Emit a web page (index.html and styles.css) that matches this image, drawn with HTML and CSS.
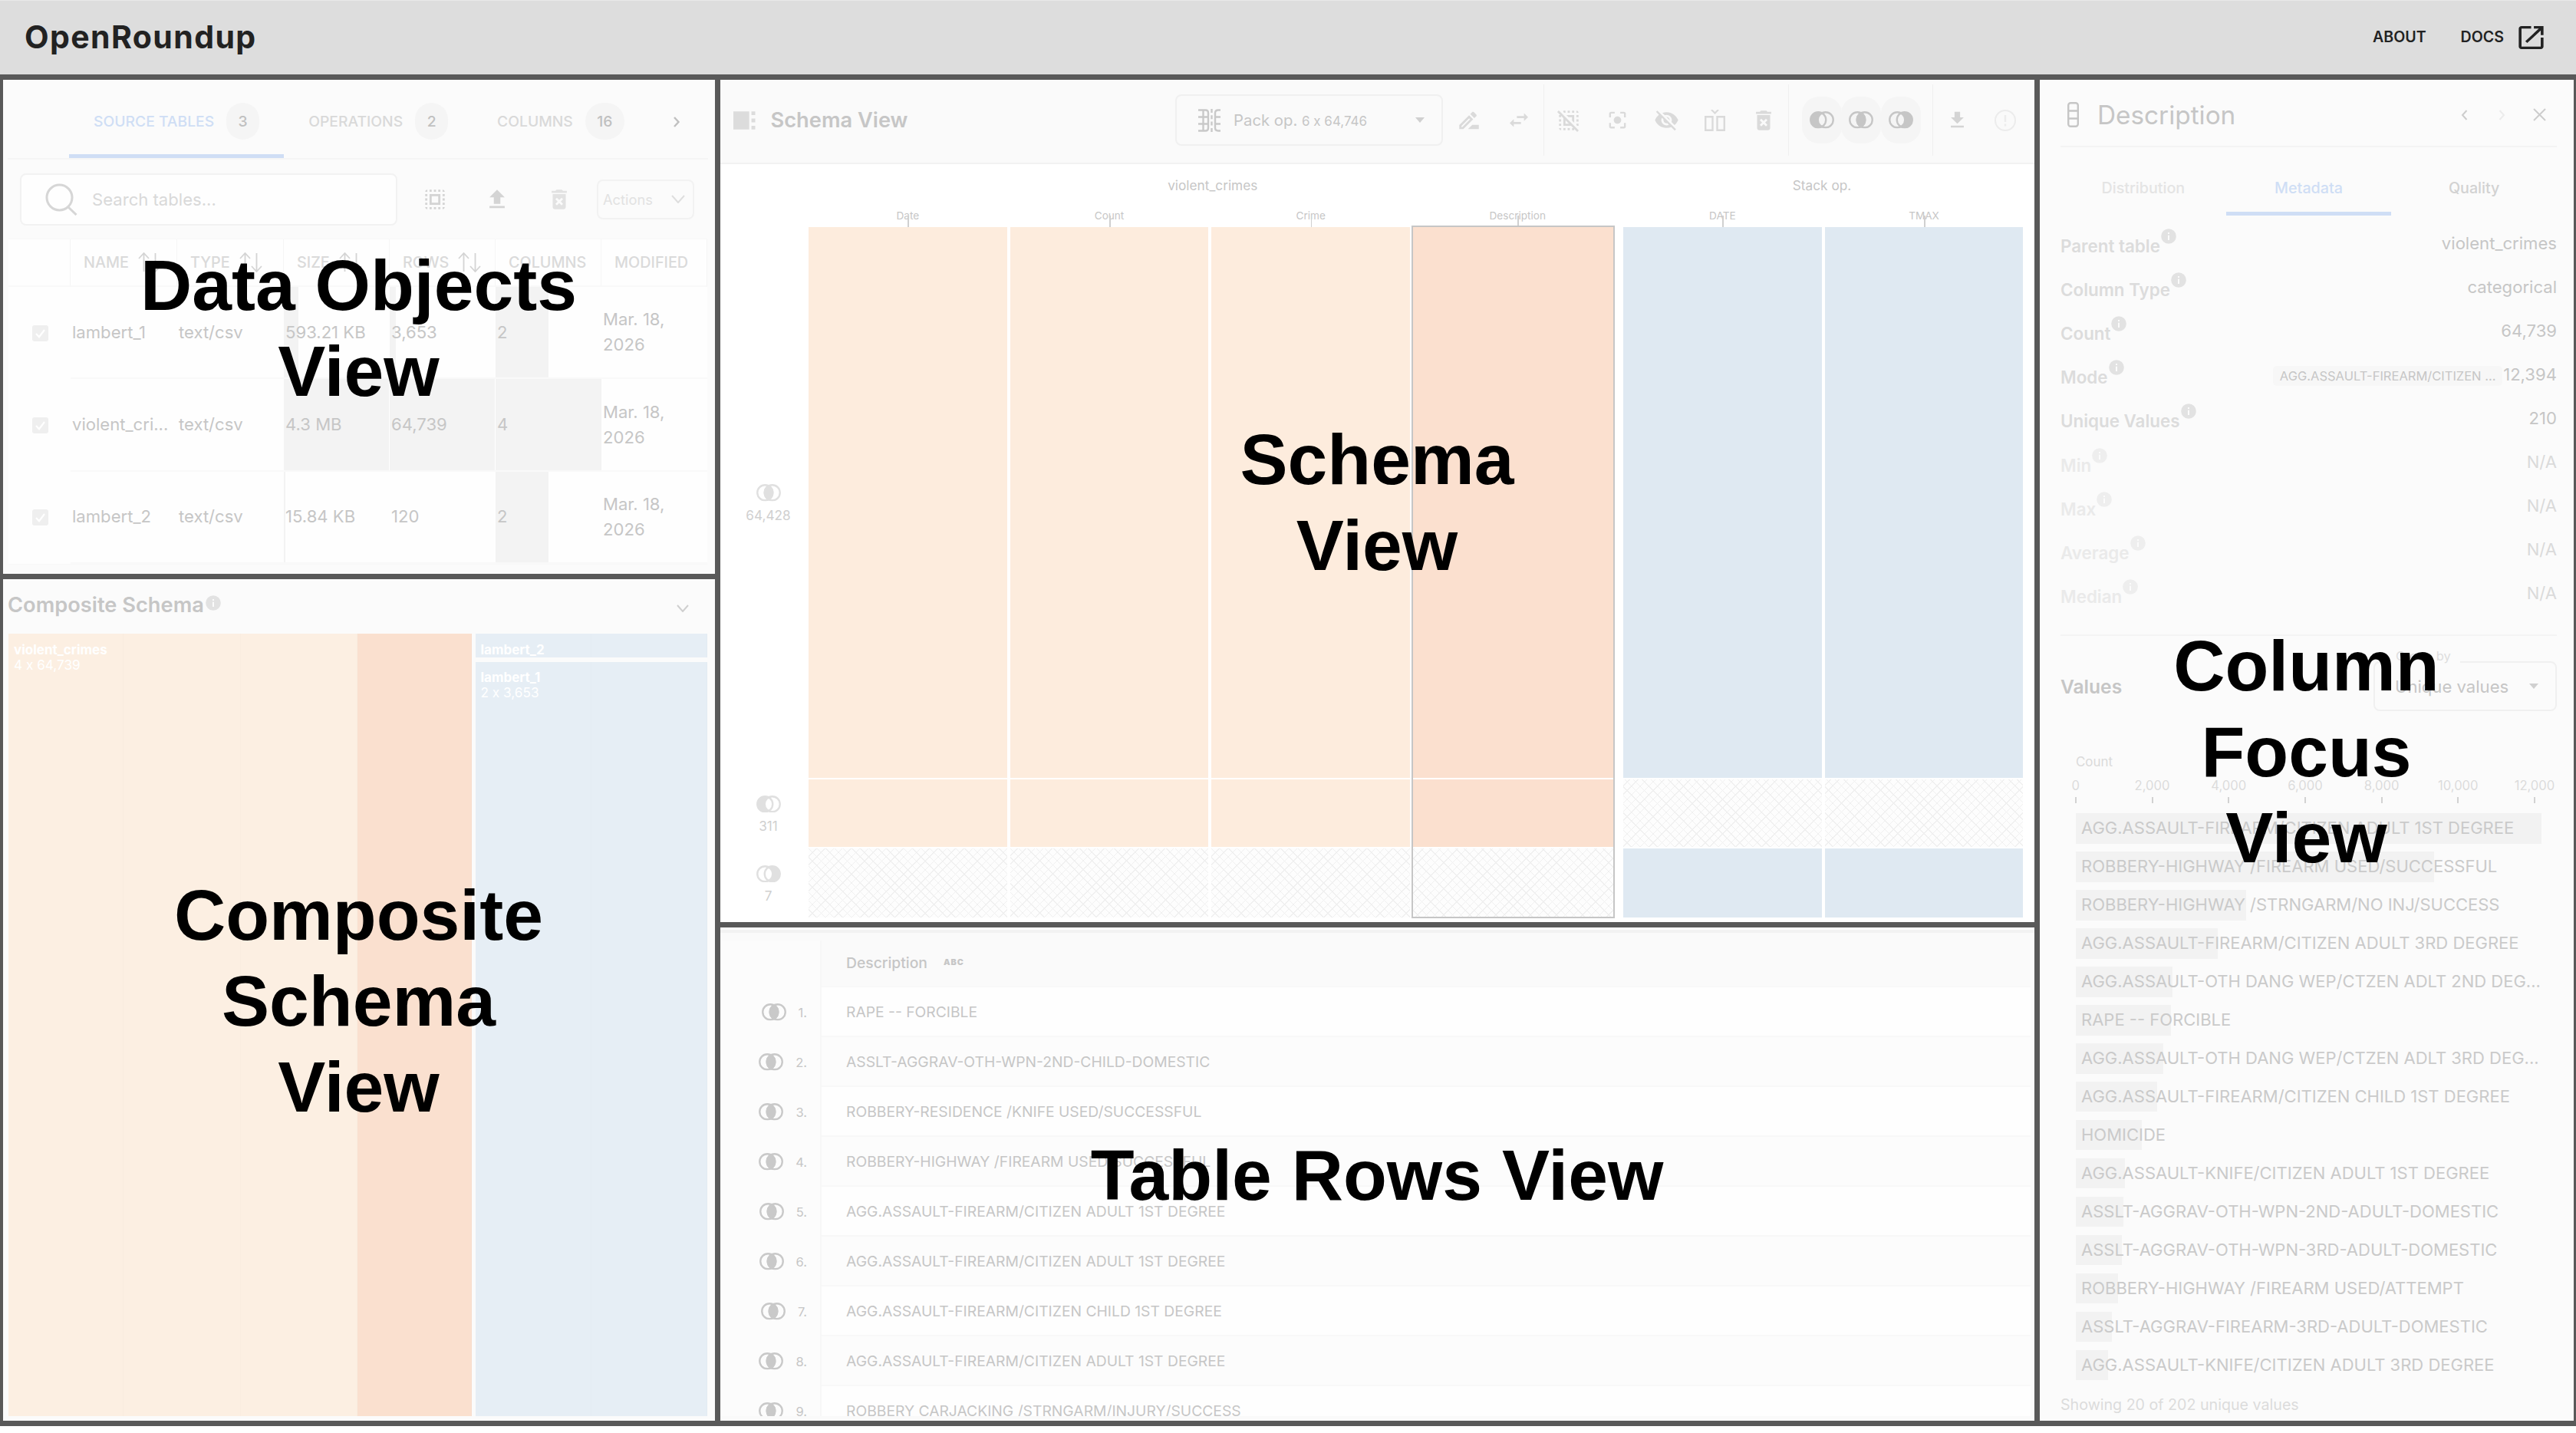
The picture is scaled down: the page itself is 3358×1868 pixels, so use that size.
FILE: index.html
```
<!DOCTYPE html>
<html lang="en">
<head>
    <meta charset="UTF-8">
    <meta name="viewport" content="width=device-width, initial-scale=1.0">
    <title>OpenRoundup</title>
    <link rel="stylesheet" href="styles.css">
</head>
<body>
    <svg class="symbols" xmlns="http://www.w3.org/2000/svg">
        <symbol id="venn-both" viewBox="0 0 32 22.5">
            <circle cx="11.25" cy="11.25" r="10" fill="none" stroke="currentColor" stroke-width="2.4"/>
            <circle cx="20.75" cy="11.25" r="10" fill="none" stroke="currentColor" stroke-width="2.4"/>
            <path d="M16 2.45A10 10 0 0 1 16 20.05A10 10 0 0 1 16 2.45z" fill="currentColor" stroke="currentColor" stroke-width="2.4"/>
        </symbol>
        <symbol id="venn-left" viewBox="0 0 32 22.5">
            <path d="M16 2.45A10 10 0 1 0 16 20.05A10 10 0 0 1 16 2.45z" fill="currentColor"/>
            <circle cx="11.25" cy="11.25" r="10" fill="none" stroke="currentColor" stroke-width="2.4"/>
            <circle cx="20.75" cy="11.25" r="10" fill="none" stroke="currentColor" stroke-width="2.4"/>
        </symbol>
        <symbol id="venn-right" viewBox="0 0 32 22.5">
            <path d="M16 2.45A10 10 0 1 1 16 20.05A10 10 0 0 0 16 2.45z" fill="currentColor"/>
            <circle cx="11.25" cy="11.25" r="10" fill="none" stroke="currentColor" stroke-width="2.4"/>
            <circle cx="20.75" cy="11.25" r="10" fill="none" stroke="currentColor" stroke-width="2.4"/>
        </symbol>
        <symbol id="info" viewBox="0 0 20 20">
            <circle cx="10" cy="10" r="9.8" fill="currentColor"/>
            <rect x="9" y="5" width="2" height="2" fill="#fbfbfb"/>
            <rect x="9" y="8.6" width="2" height="6.4" fill="#fbfbfb"/>
        </symbol>
        <symbol id="trash" viewBox="0 0 24 24">
            <path d="M6 19c0 1.1.9 2 2 2h8c1.1 0 2-.9 2-2V7H6v12zm2.46-7.12l1.41-1.41L12 12.59l2.12-2.12 1.41 1.41L13.41 14l2.12 2.12-1.41 1.41L12 15.41l-2.12 2.12-1.41-1.41L10.59 14l-2.13-2.12zM15.5 4l-1-1h-5l-1 1H5v2h14V4z" fill="currentColor"/>
        </symbol>
        <symbol id="check" viewBox="0 0 21 21">
            <rect width="21" height="21" rx="3" fill="#efefef"/>
            <path d="M5 11l4 4.2L16 6" fill="none" stroke="#fff" stroke-width="2.2"/>
        </symbol>
        <symbol id="sort" viewBox="0 0 30 26">
            <path d="M7.5 25V1.5M1 8l6.5-7L14 8M22.5 1v23.5M16 18l6.5 7 6.5-7" fill="none" stroke="currentColor" stroke-width="1.8"/>
        </symbol>
        <symbol id="caret" viewBox="0 0 12 7">
            <path d="M0 0h12L6 7z" fill="currentColor"/>
        </symbol>
    </svg>

    <header class="app-header">
        <div class="brand">OpenRoundup</div>
        <nav class="nav">
            <a class="nav-about">ABOUT</a>
            <a class="nav-docs">DOCS</a>
            <svg class="nav-icon" viewBox="0 0 24 24" preserveAspectRatio="none"><path d="M19 19H5V5h7V3H5c-1.11 0-2 .9-2 2v14c0 1.1.89 2 2 2h14c1.1 0 2-.9 2-2v-7h-2v7zM14 3v2h3.59l-9.83 9.83 1.41 1.41L19 6.41V10h2V3h-7z" fill="#222"/></svg>
        </nav>
    </header>

    <main class="workspace">
        <div class="col col-left">
            <section class="panel data-objects">
                <div class="tabs">
                    <div class="tab active">SOURCE TABLES<span class="badge">3</span></div>
                    <div class="tab">OPERATIONS<span class="badge">2</span></div>
                    <div class="tab">COLUMNS<span class="badge wide">16</span></div>
                    <svg class="tab-next" viewBox="0 0 9 14"><path d="M1.5 1l5.5 6-5.5 6" fill="none" stroke="#c0c0c0" stroke-width="2.4"/></svg>
                </div>
                <div class="search-row">
                    <div class="search">
                        <svg width="43" height="42" viewBox="0 0 43 42"><circle cx="19.5" cy="18.5" r="16.5" fill="none" stroke="#d6d6d6" stroke-width="3"/><path d="M30.5 30.5l11 10.5" stroke="#d6d6d6" stroke-width="3"/></svg>
                        <span>Search tables...</span>
                    </div>
                    <svg class="tool" width="34" height="34" viewBox="0 0 24 24"><path d="M3 5h2V3c-1.1 0-2 .9-2 2zm0 8h2v-2H3v2zm4 8h2v-2H7v2zM3 9h2V7H3v2zm10-6h-2v2h2V3zm6 0v2h2c0-1.1-.9-2-2-2zM5 21v-2H3c0 1.1.9 2 2 2zm-2-4h2v-2H3v2zM9 3H7v2h2V3zm2 18h2v-2h-2v2zm8-8h2v-2h-2v2zm0 8c1.1 0 2-.9 2-2h-2v2zm0-12h2V7h-2v2zm0 8h2v-2h-2v2zm-4 4h2v-2h-2v2zm0-16h2V3h-2v2zM7 17h10V7H7v10zm2-8h6v6H9V9z" fill="currentColor"/></svg>
                    <svg class="tool" width="34" height="34" viewBox="0 0 24 24"><path d="M5 20h14v-2H5v2zm0-10h4v6h6v-6h4l-7-7-7 7z" fill="currentColor"/></svg>
                    <svg class="tool light" width="34" height="34"><use href="#trash"/></svg>
                    <div class="actions">
                        <span>Actions</span>
                        <svg width="18" height="11" viewBox="0 0 18 11"><path d="M1 1l8 9 8-9" fill="none" stroke="#dedede" stroke-width="2"/></svg>
                    </div>
                </div>
                <div class="table">
                    <div class="tr head">
                        <div></div>
                        <div>NAME<svg class="sort"><use href="#sort"/></svg></div>
                        <div>TYPE<svg class="sort"><use href="#sort"/></svg></div>
                        <div>SIZE<svg class="sort"><use href="#sort"/></svg></div>
                        <div>ROWS<svg class="sort"><use href="#sort"/></svg></div>
                        <div>COLUMNS</div>
                        <div>MODIFIED</div>
                    </div>
                    <div class="tr">
                        <div class="sel"><svg><use href="#check"/></svg></div>
                        <div>lambert_1</div>
                        <div>text/csv</div>
                        <div class="meter"><i style="width:19px"></i><span>593.21 KB</span></div>
                        <div class="meter"><i style="width:8px"></i><span>3,653</span></div>
                        <div class="meter"><i style="width:69px"></i><span>2</span></div>
                        <div>Mar. 18, 2026</div>
                    </div>
                    <div class="tr">
                        <div class="sel"><svg><use href="#check"/></svg></div>
                        <div>violent_cri...</div>
                        <div>text/csv</div>
                        <div class="meter"><i style="width:137px"></i><span>4.3 MB</span></div>
                        <div class="meter"><i style="width:137px"></i><span>64,739</span></div>
                        <div class="meter"><i style="width:138px"></i><span>4</span></div>
                        <div>Mar. 18, 2026</div>
                    </div>
                    <div class="tr">
                        <div class="sel"><svg><use href="#check"/></svg></div>
                        <div>lambert_2</div>
                        <div>text/csv</div>
                        <div class="meter"><i style="width:2px"></i><span>15.84 KB</span></div>
                        <div class="meter"><span>120</span></div>
                        <div class="meter"><i style="width:69px"></i><span>2</span></div>
                        <div>Mar. 18, 2026</div>
                    </div>
                </div>
                <div class="overlay">Data Objects<br>View</div>
            </section>

            <section class="panel composite">
                <div class="composite-head">
                    <h2>Composite Schema</h2>
                    <svg class="info"><use href="#info"/></svg>
                    <svg class="fold" viewBox="0 0 16 10"><path d="M1 1l7 8 7-8" fill="none" stroke="#cfcfcf" stroke-width="2"/></svg>
                </div>
                <div class="treemap">
                    <div class="tm tm-crimes">
                        <div class="tm-label"><b>violent_crimes</b>4 x 64,739</div>
                        <div></div>
                        <div></div>
                        <div class="picked"></div>
                    </div>
                    <div class="tm-stack">
                        <div class="tm tm-weather short"><div class="tm-label"><b>lambert_2</b></div><div></div></div>
                        <div class="tm tm-weather"><div class="tm-label"><b>lambert_1</b>2 x 3,653</div><div></div></div>
                    </div>
                </div>
                <div class="overlay">Composite<br>Schema<br>View</div>
            </section>
        </div>

        <div class="col col-center">
            <section class="panel schema">
                <div class="toolbar">
                    <svg class="schema-icon" viewBox="0 0 29 24"><path d="M0 0h21v24H0zM24 0h5v5h-5zM24 9.5h5v5h-5zM24 19h5v5h-5z" fill="#dcdcdc"/></svg>
                    <h2>Schema View</h2>
                    <div class="op-select">
                        <svg width="31" height="30" viewBox="0 0 31 30"><path d="M1 1.5h9.5q3.5 0 3.5 3.5v20q0 3.5-3.5 3.5H1M1 10.5h13M1 19.5h13M7.500 1.500v27M30 1.500h-3q-4 0-4 4v19q0 4 4 4H30M23 10.500H30M23 19.500H30" fill="none" stroke="#c9c9c9" stroke-width="2.4"/><path d="M18.500 0v30" stroke="#c9c9c9" stroke-width="2.4" stroke-dasharray="5 3.3"/></svg>
                        <span class="op-name">Pack op. <small>6 x 64,746</small></span>
                        <svg class="caret"><use href="#caret"/></svg>
                    </div>
                    <div class="tools tools-edit">
                        <svg width="34" height="34" viewBox="0 0 24 24"><path d="M15 16l-4 4h10v-4zM12.06 7.19L3 16.25V20h3.75l9.06-9.06-3.75-3.75zM5.92 18H5v-.92l7.06-7.06.92.92L5.92 18zM18.71 8.04c.39-.39.39-1.02 0-1.41l-2.34-2.34c-.2-.2-.45-.29-.71-.29s-.51.1-.7.29l-1.83 1.83 3.75 3.75 1.83-1.83z" fill="currentColor"/></svg>
                        <svg width="32" height="31" viewBox="0 0 24 24" preserveAspectRatio="none"><path d="M6.99 11L3 15l3.99 4v-3H14v-2H6.99v-3zM21 9l-3.99-4v3H10v2h7.01v3L21 9z" fill="currentColor"/></svg>
                    </div>
                    <div class="rule"></div>
                    <div class="tools">
                        <svg width="34" height="34" viewBox="0 0 24 24"><path d="M3 13h2v-2H3v2zM7 21h2v-2H7v2zM13 3h-2v2h2V3zM19 3v2h2c0-1.1-.9-2-2-2zM5 21v-2H3c0 1.1.9 2 2 2zM3 17h2v-2H3v2zM11 21h2v-2h-2v2zM19 13h2v-2h-2v2zM19 9h2V7h-2v2zM15 5h2V3h-2v2zM7.83 5H9V3H7v1.17zM19.83 17H21v-2h-2v1.17zM21.19 21.19L2.81 2.81 1.39 4.22 4.17 7H3v2h2V7.83l2 2V17h7.17l2 2H15v2h2v-1.17l2.78 2.78 1.41-1.42zM9 15v-3.17L12.17 15H9zM15 12.17V9h-3.17l-2-2H17v7.17z" fill="currentColor"/></svg>
                        <svg width="29" height="29" viewBox="0 0 24 24"><path d="M12 8c-2.21 0-4 1.79-4 4s1.79 4 4 4 4-1.79 4-4-1.79-4-4-4zm-7 7H3v4c0 1.1.9 2 2 2h4v-2H5v-4zM5 5h4V3H5c-1.1 0-2 .9-2 2v4h2V5zm14-2h-4v2h4v4h2V5c0-1.1-.9-2-2-2zm0 16h-4v2h4c1.1 0 2-.9 2-2v-4h-2v4z" fill="currentColor"/></svg>
                        <svg width="33" height="33" viewBox="0 0 24 24"><path d="M12 7c2.76 0 5 2.24 5 5 0 .65-.13 1.26-.36 1.83l2.92 2.92c1.51-1.26 2.7-2.89 3.43-4.75-1.73-4.39-6-7.5-11-7.5-1.4 0-2.74.25-3.98.7l2.16 2.16C10.74 7.13 11.35 7 12 7zM2 4.27l2.28 2.28.46.46C3.08 8.3 1.78 10.02 1 12c1.73 4.39 6 7.5 11 7.5 1.55 0 3.03-.3 4.38-.84l.42.42L19.73 22 21 20.73 3.27 3 2 4.27zM7.53 9.8l1.55 1.55c-.05.21-.08.43-.08.65 0 1.66 1.34 3 3 3 .22 0 .44-.03.65-.08l1.55 1.55c-.67.33-1.41.53-2.2.53-2.76 0-5-2.24-5-5 0-.79.2-1.53.53-2.2zm4.31-.78l3.15 3.15.02-.16c0-1.66-1.34-3-3-3l-.17.01z" fill="currentColor"/></svg>
                        <svg width="27" height="28" viewBox="0 0 27 28"><path d="M1.2 9.2h9.3v17.6H1.2zM16.5 9.2h9.3v17.6h-9.3z" fill="none" stroke="currentColor" stroke-width="2.4"/><path d="M9 0l4.5 4.5L18 0" fill="none" stroke="currentColor" stroke-width="2.2"/></svg>
                        <svg width="34" height="34"><use href="#trash"/></svg>
                    </div>
                    <div class="rule"></div>
                    <div class="toggles">
                        <div class="toggle"><svg class="venn"><use href="#venn-left"/></svg></div>
                        <div class="toggle"><svg class="venn"><use href="#venn-both"/></svg></div>
                        <div class="toggle"><svg class="venn"><use href="#venn-right"/></svg></div>
                    </div>
                    <div class="rule"></div>
                    <div class="tools tools-end">
                        <svg width="29" height="29" viewBox="0 0 24 24"><path d="M5 20h14v-2H5v2zM19 9h-4V3H9v6H5l7 7 7-7z" fill="currentColor"/></svg>
                        <svg class="faint" width="30" height="30" viewBox="0 0 30 30"><circle cx="15" cy="15" r="13" fill="none" stroke="currentColor" stroke-width="2"/><path d="M15 8v9M15 19.5v3" stroke="currentColor" stroke-width="2.4"/></svg>
                    </div>
                </div>
                <div class="schema-body">
                    <div class="row-labels">
                        <div class="row-label"><svg class="venn"><use href="#venn-both"/></svg><span>64,428</span></div>
                        <div class="row-label"><svg class="venn"><use href="#venn-left"/></svg><span>311</span></div>
                        <div class="row-label"><svg class="venn"><use href="#venn-right"/></svg><span>7</span></div>
                    </div>
                    <div class="group group-crimes">
                        <div class="group-name">violent_crimes</div>
                        <div class="columns">
                            <div class="column"><span>Date</span><i></i><i></i><i class="empty"></i></div>
                            <div class="column"><span>Count</span><i></i><i></i><i class="empty"></i></div>
                            <div class="column"><span>Crime</span><i></i><i></i><i class="empty"></i></div>
                            <div class="column selected"><span>Description</span><i></i><i></i><i class="empty"></i></div>
                        </div>
                    </div>
                    <div class="group group-stack">
                        <div class="group-name">Stack op.</div>
                        <div class="columns">
                            <div class="column"><span>DATE</span><i></i><i class="empty"></i><i></i></div>
                            <div class="column"><span>TMAX</span><i></i><i class="empty"></i><i></i></div>
                        </div>
                    </div>
                </div>
                <div class="overlay">Schema<br>View</div>
            </section>

            <section class="panel rows">
                <div class="rows-table">
                    <div class="rrow rhead"><div class="idx"></div><div class="val">Description<span class="abc">ABC</span></div></div>
                    <div class="rrow"><div class="idx"><svg class="venn"><use href="#venn-both"/></svg><span>1.</span></div><div class="val">RAPE -- FORCIBLE</div></div>
                    <div class="rrow"><div class="idx"><svg class="venn"><use href="#venn-both"/></svg><span>2.</span></div><div class="val">ASSLT-AGGRAV-OTH-WPN-2ND-CHILD-DOMESTIC</div></div>
                    <div class="rrow"><div class="idx"><svg class="venn"><use href="#venn-both"/></svg><span>3.</span></div><div class="val">ROBBERY-RESIDENCE /KNIFE USED/SUCCESSFUL</div></div>
                    <div class="rrow"><div class="idx"><svg class="venn"><use href="#venn-both"/></svg><span>4.</span></div><div class="val">ROBBERY-HIGHWAY /FIREARM USED/SUCCESSFUL</div></div>
                    <div class="rrow"><div class="idx"><svg class="venn"><use href="#venn-both"/></svg><span>5.</span></div><div class="val">AGG.ASSAULT-FIREARM/CITIZEN ADULT 1ST DEGREE</div></div>
                    <div class="rrow"><div class="idx"><svg class="venn"><use href="#venn-both"/></svg><span>6.</span></div><div class="val">AGG.ASSAULT-FIREARM/CITIZEN ADULT 1ST DEGREE</div></div>
                    <div class="rrow"><div class="idx"><svg class="venn"><use href="#venn-both"/></svg><span>7.</span></div><div class="val">AGG.ASSAULT-FIREARM/CITIZEN CHILD 1ST DEGREE</div></div>
                    <div class="rrow"><div class="idx"><svg class="venn"><use href="#venn-both"/></svg><span>8.</span></div><div class="val">AGG.ASSAULT-FIREARM/CITIZEN ADULT 1ST DEGREE</div></div>
                    <div class="rrow"><div class="idx"><svg class="venn"><use href="#venn-both"/></svg><span>9.</span></div><div class="val">ROBBERY CARJACKING /STRNGARM/INJURY/SUCCESS</div></div>
                </div>
                <div class="overlay">Table Rows View</div>
            </section>
        </div>

        <div class="col col-right">
            <section class="panel focus">
                <div class="focus-head">
                    <svg class="column-icon" viewBox="0 0 15 33"><rect x="1.2" y="1.2" width="12.6" height="30.6" rx="3" fill="none" stroke="#c6c6c6" stroke-width="2.4"/><path d="M1 11.5h13M1 21.5h13" stroke="#c6c6c6" stroke-width="2.4"/></svg>
                    <h1>Description</h1>
                    <div class="focus-nav">
                        <svg width="9" height="14" viewBox="0 0 9 14"><path d="M7.5 1L2 7l5.5 6" fill="none" stroke="#cdcdcd" stroke-width="2"/></svg>
                        <svg width="9" height="14" viewBox="0 0 9 14"><path d="M1.5 1L7 7l-5.5 6" fill="none" stroke="#ececec" stroke-width="2"/></svg>
                        <svg class="close" width="17" height="17" viewBox="0 0 17 17"><path d="M1 1l15 15M16 1L1 16" stroke="#cdcdcd" stroke-width="2"/></svg>
                    </div>
                </div>
                <div class="focus-tabs">
                    <div class="muted">Distribution</div>
                    <div class="active">Metadata</div>
                    <div>Quality</div>
                </div>
                <div class="meta">
                    <div class="meta-row"><b>Parent table</b><svg class="info"><use href="#info"/></svg><span>violent_crimes</span></div>
                    <div class="meta-row"><b>Column Type</b><svg class="info"><use href="#info"/></svg><span>categorical</span></div>
                    <div class="meta-row"><b>Count</b><svg class="info"><use href="#info"/></svg><span>64,739</span></div>
                    <div class="meta-row"><b>Mode</b><svg class="info"><use href="#info"/></svg><em>AGG.ASSAULT-FIREARM/CITIZEN ...</em><span>12,394</span></div>
                    <div class="meta-row"><b>Unique Values</b><svg class="info"><use href="#info"/></svg><span>210</span></div>
                    <div class="meta-row off"><b>Min</b><svg class="info"><use href="#info"/></svg><span>N/A</span></div>
                    <div class="meta-row off"><b>Max</b><svg class="info"><use href="#info"/></svg><span>N/A</span></div>
                    <div class="meta-row off"><b>Average</b><svg class="info"><use href="#info"/></svg><span>N/A</span></div>
                    <div class="meta-row off"><b>Median</b><svg class="info"><use href="#info"/></svg><span>N/A</span></div>
                </div>
                <div class="values-head">
                    <h3>Values</h3>
                    <div class="group-by">
                        <label>Group by</label>
                        <span>Unique values</span>
                        <svg class="caret"><use href="#caret"/></svg>
                    </div>
                </div>
                <div class="chart">
                    <div class="chart-title">Count</div>
                    <div class="axis"><span>0</span><span>2,000</span><span>4,000</span><span>6,000</span><span>8,000</span><span>10,000</span><span>12,000</span></div>
                    <div class="bars">
                        <div class="bar" style="width:607px">AGG.ASSAULT-FIREARM/CITIZEN ADULT 1ST DEGREE</div>
                        <div class="bar" style="width:467px">ROBBERY-HIGHWAY /FIREARM USED/SUCCESSFUL</div>
                        <div class="bar" style="width:222px">ROBBERY-HIGHWAY /STRNGARM/NO INJ/SUCCESS</div>
                        <div class="bar" style="width:185px">AGG.ASSAULT-FIREARM/CITIZEN ADULT 3RD DEGREE</div>
                        <div class="bar" style="width:126px">AGG.ASSAULT-OTH DANG WEP/CTZEN ADLT 2ND DEG...</div>
                        <div class="bar" style="width:124px">RAPE -- FORCIBLE</div>
                        <div class="bar" style="width:114px">AGG.ASSAULT-OTH DANG WEP/CTZEN ADLT 3RD DEG...</div>
                        <div class="bar" style="width:106px">AGG.ASSAULT-FIREARM/CITIZEN CHILD 1ST DEGREE</div>
                        <div class="bar" style="width:86px">HOMICIDE</div>
                        <div class="bar" style="width:64px">AGG.ASSAULT-KNIFE/CITIZEN ADULT 1ST DEGREE</div>
                        <div class="bar" style="width:62px">ASSLT-AGGRAV-OTH-WPN-2ND-ADULT-DOMESTIC</div>
                        <div class="bar" style="width:60px">ASSLT-AGGRAV-OTH-WPN-3RD-ADULT-DOMESTIC</div>
                        <div class="bar" style="width:55px">ROBBERY-HIGHWAY /FIREARM USED/ATTEMPT</div>
                        <div class="bar" style="width:47px">ASSLT-AGGRAV-FIREARM-3RD-ADULT-DOMESTIC</div>
                        <div class="bar" style="width:42px">AGG.ASSAULT-KNIFE/CITIZEN ADULT 3RD DEGREE</div>
                    </div>
                </div>
                <div class="showing">Showing 20 of 202 unique values</div>
                <div class="overlay">Column<br>Focus<br>View</div>
            </section>
        </div>
    </main>
</body>
</html>
```
FILE: styles.css
```
* {
    box-sizing: border-box;
}
body {
    margin: 0;
    background: #fff;
    font-family: Inter, "Liberation Sans", sans-serif;
    font-size: 22.1px;
    color: #c6c6c6;
}
h1, h2, h3 {
    margin: 0;
}
svg {
    display: block;
    flex: none;
}
.symbols {
    display: none;
}

/* Header */
.app-header {
    height: 97px;
    padding: 0 33px 3px 32px;
    display: flex;
    justify-content: space-between;
    align-items: center;
    background: #ddd;
    border-top: 1px solid #e8e8e8;
    color: #222;
}
.brand {
    font-size: 41px;
    font-weight: 700;
    letter-spacing: 1.4px;
}
.nav {
    display: flex;
    align-items: center;
    font-size: 19.6px;
    font-weight: 600;
}
.nav-docs {
    margin-left: 45px;
}
.nav-icon {
    width: 43px;
    height: 40px;
    margin: 2px 4px 0 14px;
}

/* Workspace frame */
.workspace {
    height: 1762px;
    padding: 7px 3px 7px 4px;
    display: flex;
    gap: 7px;
    background: #595959;
}
.col {
    flex: none;
    display: flex;
    flex-direction: column;
    gap: 7px;
}
.col-left {
    width: 928px;
}
.col-center {
    width: 1713px;
}
.col-right {
    width: 696px;
}
.panel {
    position: relative;
    overflow: hidden;
    background: #fbfbfb;
}
.overlay {
    position: absolute;
    inset: 0;
    display: flex;
    align-items: center;
    justify-content: center;
    padding: 3px 1px 0 0;
    text-align: center;
    color: #000;
    font: bold 93.1px/112px "Liberation Sans", Arial, sans-serif;
}

/* Data objects */
.data-objects {
    height: 644px;
}
.tabs {
    height: 104px;
    margin: 0 9px 0 6px;
    padding-left: 80px;
    display: flex;
    border-bottom: 2px solid #f5f5f5;
    font-size: 19.3px;
    font-weight: 500;
    color: #d9d9d9;
}
.tab {
    display: flex;
    align-items: center;
    padding: 6px 32px 0;
}
.tab.active {
    color: #cfdef5;
    box-shadow: inset 0 -5px #cfdef5;
}
.badge {
    width: 43px;
    height: 48px;
    margin-left: 16px;
    border-radius: 24px;
    background: #f5f5f5;
    color: #c0c0c0;
    line-height: 48px;
    text-align: center;
}
.badge.wide {
    width: 51px;
}
.tab-next {
    width: 10px;
    height: 14px;
    margin: 48px 0 0 31px;
}
.search-row {
    height: 103px;
    padding-left: 22px;
    display: flex;
    align-items: center;
    color: #d4d4d4;
}
.search {
    width: 492px;
    height: 68px;
    margin-right: 32px;
    padding-left: 30px;
    display: flex;
    align-items: center;
    border: 2px solid #f2f2f2;
    border-radius: 8px;
    background: #fefefe;
}
.search span {
    margin-left: 19px;
    color: #d9d9d9;
}
.tool {
    margin-right: 47px;
}
.tool.light {
    margin-right: 32px;
    color: #e2e2e2;
}
.actions {
    width: 127px;
    height: 52px;
    padding: 0 10px 0 6px;
    display: flex;
    align-items: center;
    justify-content: space-between;
    border: 2px solid #f2f2f2;
    border-radius: 8px;
    font-size: 18.3px;
    color: #e2e2e2;
}
.table {
    width: 911px;
    margin-left: 7px;
    background: #fefefe;
    border: solid #f8f8f8;
    border-width: 1px 0;
}
.tr {
    display: grid;
    grid-template-columns: 81px 139px 139px 138px 138px 138px 138px;
    height: 120.4px;
}
.tr > div {
    display: flex;
    align-items: center;
    padding-left: 2px;
    border-bottom: 2px solid #f9f9f9;
    line-height: 33px;
}
.tr > .sel {
    padding-left: 31px;
    border-bottom: 0;
}
.sel svg {
    width: 21px;
    height: 21px;
}
.tr > .meter {
    position: relative;
}
.meter i {
    position: absolute;
    left: 0;
    top: 0;
    bottom: 0;
    background: #f3f3f3;
}
.meter span {
    position: relative;
}
.tr.head {
    height: 62px;
    font-size: 19.8px;
    font-weight: 500;
    color: #dadada;
}
.tr.head > div {
    padding-left: 17px;
    border-right: 1px solid #f5f5f5;
}
.sort {
    width: 30px;
    height: 26px;
    margin-left: 12px;
    color: #d4d4d4;
}

/* Composite schema */
.composite {
    flex: 1;
}
.composite-head {
    height: 71px;
    padding: 0 34px 5px 6px;
    display: flex;
    align-items: center;
}
.composite-head h2, .toolbar h2 {
    font-size: 27.25px;
    font-weight: 600;
    color: #c6c6c6;
}
.composite-head .info {
    margin: 0 auto 4px 2px;
}
.info {
    width: 20px;
    height: 20px;
    color: #e2e2e2;
}
.fold {
    width: 16px;
    height: 10px;
    margin-top: 10px;
}
.treemap {
    height: 1020px;
    margin: 0 10.5px 0 7px;
    display: flex;
    gap: 4.5px;
}
.tm {
    flex: 1;
    display: flex;
}
.tm > div {
    flex: 1;
    padding: 10.5px 0 0 7px;
    border-right: 1px solid rgba(0, 0, 0, 0.012);
    font-size: 17.2px;
    line-height: 20px;
    white-space: nowrap;
    font-variant-ligatures: no-contextual;
    color: #fff;
}
.tm b {
    display: block;
    font-size: 17px;
}
.tm-crimes {
    flex: 0 0 604px;
    background: #fcefe2;
}
.tm-crimes .tm-label {
    flex: 0 0 150px;
}
.tm-crimes .picked {
    flex: 0 0 149px;
    background: #fae0cf;
}
.tm-stack {
    flex: 1;
    display: flex;
    flex-direction: column;
    gap: 6px;
}
.tm-weather {
    background: #e6eef5;
}
.tm-weather.short {
    flex: 0 0 30px;
}

/* Schema view */
.schema {
    height: 1098px;
    background: #fff;
}
.toolbar {
    height: 110px;
    padding: 0 7px 3px 17px;
    display: flex;
    align-items: center;
    background: #fafafa;
    border-bottom: 2px solid #f2f2f2;
}
.schema-icon {
    width: 28.5px;
    height: 24px;
    margin-right: 20px;
}
.op-select {
    width: 349px;
    height: 67px;
    margin-left: auto;
    margin-right: 1px;
    padding: 0 22px 0 27px;
    display: flex;
    align-items: center;
    border: 2px solid #f0f0f0;
    border-radius: 8px;
}
.op-name {
    margin: 0 auto 0 16px;
    font-size: 20.3px;
    font-variant-ligatures: no-contextual;
    white-space: nowrap;
}
.op-name small {
    font-size: 17px;
}
.caret {
    width: 12px;
    height: 7px;
    color: #d0d0d0;
}
.tools {
    width: 318px;
    display: grid;
    grid-auto-flow: column;
    grid-auto-columns: 1fr;
    align-items: center;
    justify-items: center;
    color: #dadada;
}
.tools-edit {
    width: 130px;
}
.tools-end {
    width: 125px;
    color: #d4d4d4;
}
.faint {
    color: #ececec;
}
.rule {
    width: 1px;
    height: 93px;
    background: #f0f0f0;
}
.toggles {
    display: flex;
    margin: 0 16px 0 17px;
    color: #c6c6c6;
}
.toggle {
    width: 52px;
    height: 61px;
    margin-right: -0.7px;
    display: flex;
    align-items: center;
    justify-content: center;
    border-radius: 22px;
    background: #f5f5f5;
}
.venn {
    width: 32px;
    height: 22.5px;
}
.schema-body {
    display: flex;
}
.row-labels {
    width: 115px;
    padding-top: 82px;
    color: #d0d0d0;
}
.row-label {
    height: 718px;
    padding: 5px 0 0 10px;
    display: flex;
    flex-direction: column;
    align-items: center;
    justify-content: center;
    gap: 6px;
    font-size: 17.2px;
    line-height: 24px;
}
.row-label + .row-label {
    height: 91px;
    padding-top: 7px;
}
.row-label .venn {
    color: #e0e0e0;
}
.group-crimes {
    width: 1049.5px;
}
.group-stack {
    width: 522px;
    margin-left: 12.5px;
}
.group-name {
    height: 56px;
    padding-left: 4px;
    line-height: 56px;
    text-align: center;
    font-size: 17.25px;
}
.group-stack .group-name {
    padding: 0 4px 0 0;
}
.columns {
    display: flex;
    gap: 4px;
}
.column {
    position: relative;
    flex: 0 0 258.7px;
    display: grid;
    grid-template-rows: 26px 718px 90px 92px;
    text-align: center;
}
.column.selected {
    flex: 1;
    margin-left: -1px;
}
.column span {
    font-size: 13.6px;
    line-height: 22px;
}
.column.selected span {
    padding-left: 13px;
}
.column span::after {
    content: "";
    position: absolute;
    left: 50%;
    top: 11px;
    width: 1.5px;
    height: 15px;
    background: #d0d0d0;
}
.column.selected span {
    padding-left: 12px;
}
.column.selected span::after {
    margin-left: 6px;
}
.column i + i {
    margin-top: 2px;
}
.column i {
    background: #fdecdd;
}
.column.selected i {
    background: #fbe0cf;
}
.group-stack i {
    background: #dfe9f2;
}
.column i.empty, .column.selected i.empty {
    background: repeating-linear-gradient(45deg, transparent 0 7px, #f0f0f0 7px 8px), repeating-linear-gradient(-45deg, #fdfdfd 0 7px, #f0f0f0 7px 8px);
}
.column.selected::after {
    content: "";
    position: absolute;
    inset: 24px -1px -1px -1px;
    border: 2px solid #c6c6c6;
}

/* Table rows */
.rows {
    flex: 1;
    padding: 17px 5px 6px 0;
    background: linear-gradient(#fefefe 3.5px, #f2f2f2 3.5px, #f2f2f2 7px, #fafafa 7px);
}
.rows-table {
    height: 100%;
    overflow: hidden;
}
.rrow {
    height: 65px;
    display: flex;
    background: #fefefe;
    font-size: 19.3px;
}
.rrow:nth-child(odd) {
    background: #fcfcfc;
}
.rrow.rhead {
    height: 61px;
    background: #fafafa;
    font-weight: 500;
}
.rhead .val {
    padding-bottom: 2px;
}
.idx {
    width: 132px;
    padding-right: 17px;
    display: flex;
    align-items: center;
    justify-content: flex-end;
    gap: 16px;
    background: #fcfcfc;
    border-right: 2px solid #f7f7f7;
    font-size: 16.5px;
}
.idx .venn {
    color: #c9c9c9;
}
.val {
    flex: 1;
    display: flex;
    align-items: center;
    padding-left: 32px;
    border-bottom: 2px solid #f8f8f8;
}
.abc {
    margin-left: 21px;
    font-size: 10.8px;
    font-weight: 900;
    letter-spacing: 1px;
}

/* Column focus */
.focus {
    flex: 1;
    padding: 0 22px 0 27px;
}
.focus-head {
    height: 88px;
    padding: 5px 14px 0 9px;
    display: flex;
    align-items: center;
    border-bottom: 2px solid #f4f4f4;
}
.column-icon {
    width: 15px;
    height: 33px;
}
.focus-head h1 {
    margin-left: 24px;
    font-size: 33.35px;
    font-weight: 400;
}
.focus-nav {
    margin-left: auto;
    display: flex;
    align-items: center;
    gap: 40px;
}
.close {
    margin-left: -4px;
}
.focus-tabs {
    height: 89px;
    display: flex;
    font-size: 19.7px;
    font-weight: 500;
    color: #d2d2d2;
}
.focus-tabs div {
    flex: 1;
    padding-top: 16px;
    display: flex;
    align-items: center;
    justify-content: center;
}
.focus-tabs .muted {
    color: #e4e4e4;
}
.focus-tabs .active {
    color: #cfdef5;
    box-shadow: inset 0 -5px #cfdef5;
}
.meta {
    height: 548px;
    padding-top: 11px;
    border-bottom: 2px solid #f4f4f4;
}
.meta-row {
    height: 57.1px;
    display: flex;
    align-items: center;
}
.meta-row b {
    font-size: 22.4px;
    font-weight: 600;
    color: #dcdcdc;
}
.meta-row .info {
    margin: 0 auto 25px 1px;
}
.meta-row span {
    padding-bottom: 8px;
}
.meta-row em {
    width: 299px;
    height: 26px;
    margin-top: -4px;
    border-radius: 5px;
    background: #f7f7f7;
    font-size: 16.5px;
    font-style: normal;
    line-height: 26px;
    text-align: center;
}
.meta-row em + span {
    margin-left: 1px;
}
.off b {
    color: #eaeaea;
}
.off .info {
    color: #eee;
}
.off span {
    color: #dadada;
}
.values-head {
    height: 98px;
    padding-top: 33px;
    display: flex;
    align-items: center;
    justify-content: space-between;
}
.values-head h3 {
    font-size: 24.6px;
    font-weight: 600;
}
.group-by {
    position: relative;
    width: 239px;
    height: 65px;
    padding: 0 22px 0 26px;
    display: flex;
    align-items: center;
    justify-content: space-between;
    border: 2px solid #f0f0f0;
    border-radius: 8px;
}
.group-by label {
    position: absolute;
    left: 16px;
    top: -20px;
    padding: 0 12px 0 11px;
    background: #fbfbfb;
    font-size: 16.5px;
    line-height: 22px;
    color: #dedede;
}
.chart {
    margin-left: 20px;
}
.chart-title {
    padding-top: 54px;
    font-size: 16.9px;
    line-height: 24px;
    color: #dadada;
}
.axis {
    display: flex;
    margin: 7px 0 13px -50px;
    font-size: 16.6px;
    line-height: 24px;
    color: #dcdcdc;
}
.axis span {
    position: relative;
    flex: 0 0 99.7px;
    height: 35px;
    text-align: center;
}
.axis span::after {
    content: "";
    position: absolute;
    left: 49px;
    bottom: 0;
    width: 2px;
    height: 8px;
    background: #d2d2d2;
}
.bars {
    display: grid;
    gap: 10.4px;
}
.bar {
    height: 39.6px;
    padding-left: 7px;
    background: #f2f2f2;
    font-size: 22px;
    line-height: 39px;
    white-space: nowrap;
    color: #cacaca;
}
.showing {
    margin-top: 19px;
    font-size: 19.65px;
    line-height: 26px;
    color: #dcdcdc;
}
```
